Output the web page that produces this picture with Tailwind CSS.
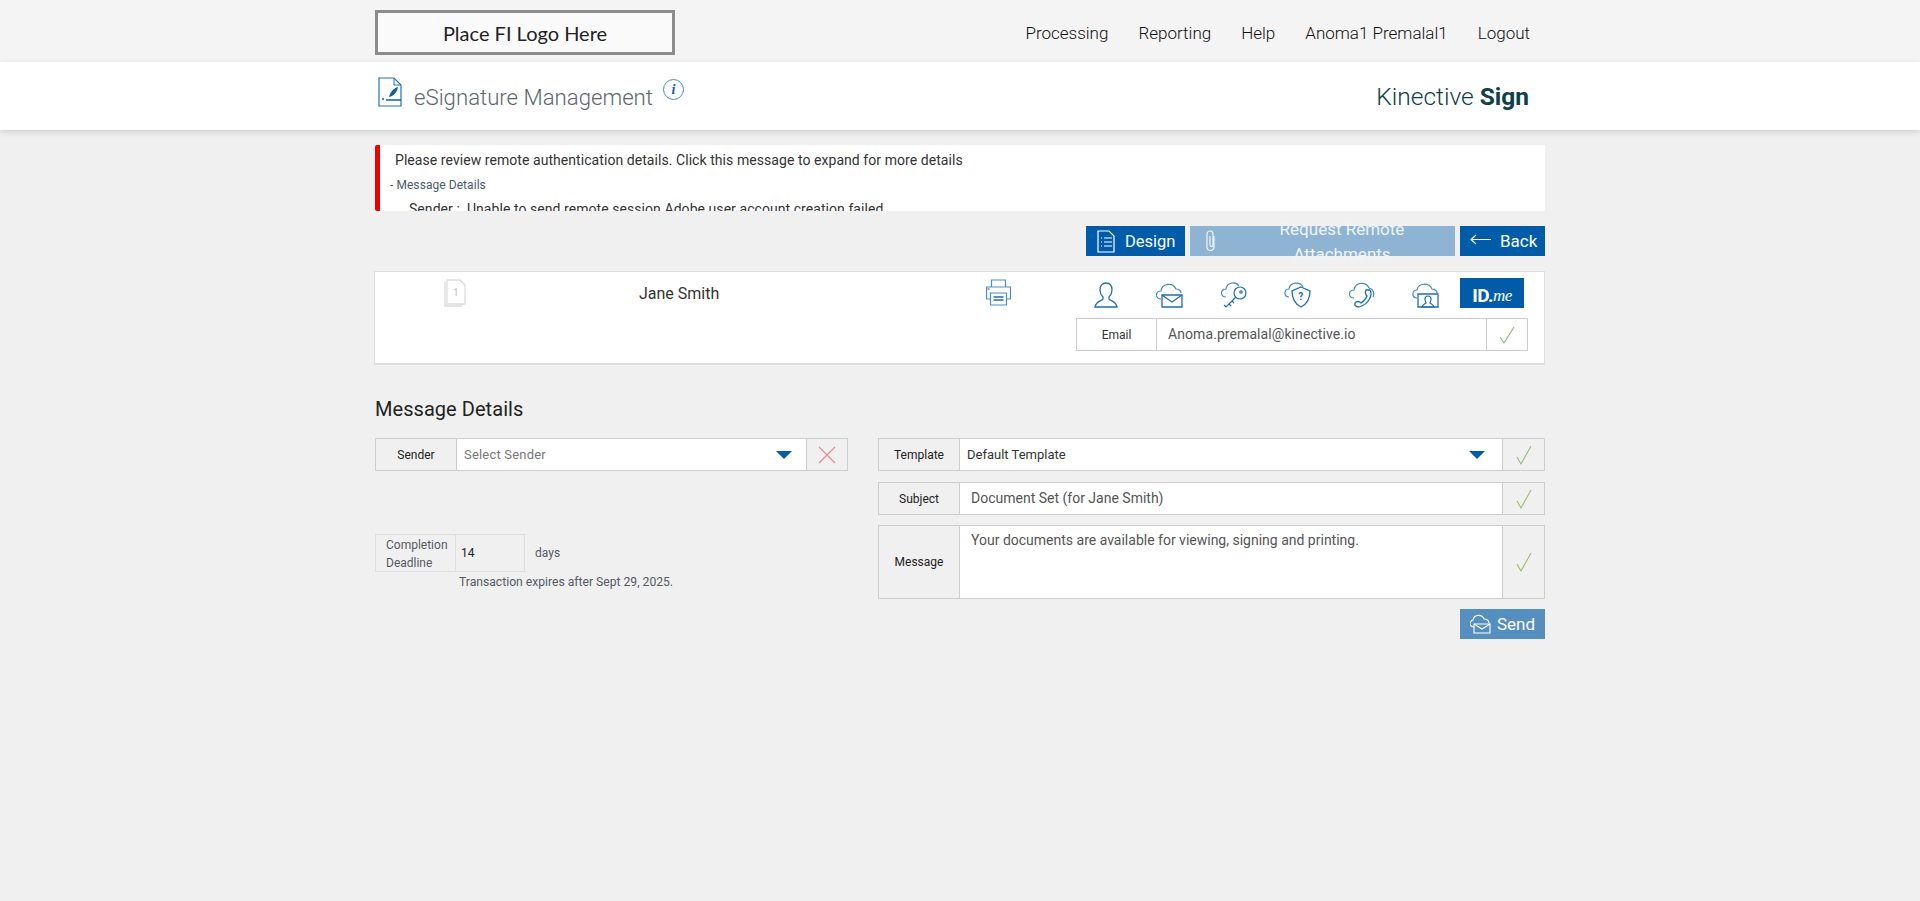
<!DOCTYPE html>
<html lang="en">
<head>
  <meta charset="UTF-8" />
  <title>eSignature Management</title>
  <script src="https://cdn.jsdelivr.net/npm/@tailwindcss/browser@4"></script>
</head>
<body class="min-h-[901px] bg-[#f0f0f0] font-['Roboto',sans-serif] text-[#333]">

  <!-- top nav -->
  <div class="h-[62px] bg-[#f4f4f4]">
    <div class="w-[1170px] mx-auto h-full flex items-start justify-between">
      <div class="mt-[10px] w-[300px] h-[45px] border-[3px] border-[#8c8c8c] bg-[#fafafa] flex items-center justify-center font-['Lato',sans-serif] font-normal text-[20px] text-[#222]">Place FI Logo Here</div>
      <nav class="flex gap-[30px] pr-[15px] pt-[23px] text-[17px] leading-[20px] font-light text-[#111]">
        <a>Processing</a>
        <a>Reporting</a>
        <a>Help</a>
        <a>Anoma1 Premalal1</a>
        <a>Logout</a>
      </nav>
    </div>
  </div>

  <!-- title bar -->
  <div class="h-[68px] bg-white shadow-[0_2px_6px_rgba(0,0,0,0.15)]">
    <div class="w-[1170px] mx-auto h-full flex justify-between">
      <div class="flex items-start">
        <svg class="ml-[3px] mt-[15px]" width="24" height="30" viewBox="0 0 24 30" fill="none">
          <path d="M1 1h15l7 7v21H1z" stroke="#2272b6" stroke-width="1.2" fill="#fff"/>
          <path d="M16 1v7h7" stroke="#2272b6" stroke-width="1"/>
          <path d="M11 20c1-5 5-9 9-10-1 5-4 9-9 10z" fill="#0f5ea8"/>
          <path d="M8 23h15" stroke="#0f5ea8" stroke-width="1.5"/>
          <path d="M4 21l2 2m0-2l-2 2" stroke="#0f5ea8" stroke-width=".8"/>
        </svg>
        <h1 class="ml-[12px] mt-[20px] text-[22.2px] leading-[30px] font-light text-[#5d6670]">eSignature Management</h1>
        <div class="ml-[10px] mt-[17px] w-[21px] h-[21px] rounded-full border border-[#3e8ec9] flex items-center justify-center font-['Liberation_Serif',serif] italic font-bold text-[14px] text-[#0f5ea8]">i</div>
      </div>
      <div class="pr-[16px] pt-[19px] text-[24.5px] leading-[32px] font-light text-[#0e4049]">Kinective <span class="font-bold">Sign</span></div>
    </div>
  </div>

  <div class="w-[1170px] mx-auto">
    <!-- alert -->
    <div class="mt-[15px] h-[66px] bg-white border-l-[5px] border-[#f00000] rounded-l-[2px] overflow-hidden text-[14px] text-[#333] tracking-[0.06px]">
      <p class="pl-[15px] pt-[5px] leading-[20px]">Please review remote authentication details. Click this message to expand for more details</p>
      <p class="pl-[10px] pt-[5px] leading-[20px] text-[12px] text-[#4a5a6a]">- Message Details</p>
      <p class="pl-[29px] pt-[4px] leading-[20px]">Sender :&nbsp; Unable to send remote session Adobe user account creation failed</p>
    </div>

    <!-- action buttons -->
    <div class="mt-[15px] flex justify-end gap-[5px] text-white">
      <button class="w-[99px] h-[30px] bg-[#005ca8] flex items-center pl-[11px] text-[16.5px] pt-[1px]">
        <svg class="-mt-[1px]" width="18" height="23" viewBox="0 0 18 23" fill="none" stroke="#fff" stroke-width="1.2"><path d="M1 1h11l5 5v16H1z"/><path d="M4 8h1M7 8h8M4 12h1M7 12h8M4 16h1M7 16h8"/></svg>
        <span class="ml-[10px] translate-y-[1px]">Design</span>
      </button>
      <button class="w-[265px] h-[30px] bg-[#8fb3d3] flex items-center pl-[15px] text-[#eef4f9] text-[17px]">
        <svg width="12" height="24" viewBox="0 0 12 24" fill="none" stroke="#eef4f9" stroke-width="1.2"><path d="M9 7v11a3.5 3.5 0 0 1-7 0V5a3 3 0 0 1 6 0v11a1.5 1.5 0 0 1-3 0V7"/></svg>
        <span class="ml-[12px] translate-y-[1px]">Request Remote Attachments</span>
      </button>
      <button class="w-[85px] h-[30px] bg-[#005ca8] flex items-center pl-[10px] text-[17px]">
        <svg class="-mt-[3px]" width="21" height="12" viewBox="0 0 21 12" fill="none" stroke="#fff" stroke-width="1.2"><path d="M21 5.5H1M6 1L1 5.5 6 10"/></svg>
        <span class="ml-[9px] translate-y-[1px]">Back</span>
      </button>
    </div>

    <!-- recipient card -->
    <div class="mt-[15px] -ml-[1px] h-[94px] bg-white border border-[#dedede] border-b-[2px] flex">
      <div class="ml-[69px] w-[22px] pt-[7px]">
        <svg width="22" height="28" viewBox="0 0 22 28" fill="none" stroke="#dcdcdc" stroke-width="1.3"><path d="M1 3v24h16v-2"/><path d="M3 1h13l5 5v19H3z"/><text x="9" y="17" font-size="10" font-family="Roboto" font-weight="700" fill="#d0d0d0" stroke="none">1</text></svg>
      </div>
      <div class="ml-[173px] w-[346px] pt-[12px] text-[16px] leading-[20px] text-[#333]">Jane Smith</div>
      <div class="pt-[7px]">
        <svg width="27" height="27" viewBox="0 0 26 27" fill="none" stroke="#4a8fc7" stroke-width="1.2"><path d="M6 8V1h14v7"/><path d="M6 20H1V8h24v12h-5"/><path d="M5 25V14h16v12H5z" fill="#fff"/><path d="M8 18h10M8 21h10" stroke="#1f6bb0" stroke-width="1.4"/><path d="M2 10h2" stroke="#1f6bb0"/></svg>
      </div>
      <div class="ml-auto w-[452px] mr-[16px] pt-[6px]">
        <div class="h-[30px] flex items-end gap-[37px] pl-[18px]">
          <svg width="24" height="26" viewBox="0 0 24 26" fill="none" stroke="#1f6fb5" stroke-width="1.3"><path d="M12 1c4 0 6 3 6 7 0 3-1 5-3 7v2c1 2 7 2 8 8H1c1-6 7-6 8-8v-2C7 13 6 11 6 8c0-4 2-7 6-7z"/></svg>
          <svg width="28" height="25" viewBox="0 0 28 25" fill="none" stroke="#3f8bc8" stroke-width="1.2"><path d="M6 16c-6 0-6-8 0-8 1-8 12-9 15-2 3 0 5 2 5 4"/><path d="M7 12h20v12H7z" fill="#fff" stroke="#1f6fb5" stroke-width="1.3"/><path d="M7 12l10 7 10-7" stroke="#1f6fb5" stroke-width="1.3"/></svg>
          <svg width="27" height="26" viewBox="0 0 27 26" fill="none" stroke="#3f8bc8" stroke-width="1.2"><path d="M6 15c-6 0-6-8 0-8 1-7 10-8 13-3"/><circle cx="20" cy="11" r="6" fill="#fff" stroke="#1f6fb5"/><circle cx="21" cy="10" r="1.2" stroke="#1f6fb5"/><path d="M16 15L6 25l-2-2M9 22l2 2M12 19l2 2" stroke="#1f6fb5"/></svg>
          <svg width="27" height="26" viewBox="0 0 27 26" fill="none" stroke="#3f8bc8" stroke-width="1.2"><path d="M5 15c-6 0-5-8 0-8 1-7 11-8 14-2"/><path d="M17 5l9 4c0 8-3 13-9 16-6-3-9-8-9-16z" fill="#fff" stroke="#1f6fb5" stroke-width="1.3"/><text x="14.2" y="18" font-size="10" font-weight="700" font-family="Roboto" fill="#1f6fb5" stroke="none">?</text></svg>
          <svg width="27" height="26" viewBox="0 0 27 26" fill="none" stroke="#3f8bc8" stroke-width="1.2"><path d="M6 16c-6 0-6-8 0-8 1-8 12-9 15-2 4 1 6 5 4 9"/><path d="M22 8c3 5-1 14-11 17-3 0-5-2-4-4 2-2 4-2 6 0 3-2 5-4 6-7-2-2-2-4-1-6 1 0 3 0 4 0z" fill="#fff" stroke="#1f6fb5" stroke-width="1.3"/></svg>
          <svg width="27" height="25" viewBox="0 0 27 25" fill="none" stroke="#3f8bc8" stroke-width="1.2"><path d="M5 15c-6 0-5-8 0-8 1-7 12-8 15-1 3 0 5 2 5 4"/><path d="M6 11h20v13H6z" fill="#fff" stroke="#1f6fb5" stroke-width="1.3"/><path d="M16 13c2 0 3 1 3 3s-1 3-1 4c1 1 3 1 4 4H10c1-3 3-3 4-4 0-1-1-2-1-4s1-3 3-3z" stroke="#1f6fb5"/></svg>
          <div class="-ml-[16px] w-[64px] h-[30px] bg-[#005ca8] flex items-end justify-center pb-[2px] text-white text-[19px] leading-[20px] font-bold tracking-[-0.5px]">ID.<span class="font-['Liberation_Serif',serif] italic font-normal text-[17px]">me</span></div>
        </div>
        <div class="mt-[10px] h-[33px] flex border border-[#cdcdcd] bg-white">
          <div class="w-[80px] border-r border-[#cdcdcd] flex items-center justify-center text-[12px] text-[#333]">Email</div>
          <div class="flex-1 flex items-center pl-[11px] text-[14px] text-[#555] tracking-[0.08px]">Anoma.premalal@kinective.io</div>
          <div class="w-[41px] border-l border-[#cdcdcd] flex items-center justify-center">
            <svg width="16" height="18" viewBox="0 0 16 18" fill="none" stroke="#8db86a" stroke-width="1.1"><path d="M1 11l4 6L15 1"/></svg>
          </div>
        </div>
      </div>
    </div>

    <h2 class="mt-[29px] text-[20px] leading-[30px] text-[#222] tracking-[0.05px]">Message Details</h2>

    <div class="mt-[14px] flex gap-[30px] items-start">
      <!-- left col -->
      <div class="w-[473px]">
        <div class="h-[33px] flex border border-[#cdcdcd]">
          <div class="w-[80px] flex items-center justify-center text-[12px] text-[#222]">Sender</div>
          <div class="flex-1 bg-white border-x border-[#cdcdcd] flex items-center justify-between pl-[7px] pr-[14px] text-[13px] text-[#777] tracking-[0.2px]">
            <span>Select Sender</span>
            <span class="w-0 h-0 border-x-[8px] border-x-transparent border-t-[8px] border-t-[#005ca8]"></span>
          </div>
          <div class="w-[40px] flex items-center justify-center">
            <svg width="18" height="18" viewBox="0 0 18 18" stroke="#e48a94" stroke-width="1.2"><path d="M1 1l16 16M17 1L1 17"/></svg>
          </div>
        </div>
        <div class="mt-[63px] flex items-center">
          <div class="w-[150px] h-[38px] flex border border-[#dedede]">
            <div class="w-[80px] border-r border-[#dedede] pl-[10px] text-[12px] leading-[18px] pt-[1px] text-[#555a66]">Completion Deadline</div>
            <div class="flex-1 flex items-center pl-[5px] text-[12px] text-[#222]">14</div>
          </div>
          <span class="ml-[10px] text-[12px] text-[#555a66]">days</span>
        </div>
        <p class="ml-[84px] mt-[1px] text-[12.15px] leading-[18px] text-[#555a66]">Transaction expires after Sept 29, 2025.</p>
      </div>

      <!-- right col -->
      <div class="flex-1 flex flex-col">
        <div class="h-[33px] flex border border-[#cdcdcd]">
          <div class="w-[80px] flex items-center justify-center text-[12px] text-[#222]">Template</div>
          <div class="flex-1 bg-white border-x border-[#cdcdcd] flex items-center justify-between pl-[7px] pr-[17px] text-[13px] text-[#333]">
            <span>Default Template</span>
            <span class="w-0 h-0 border-x-[8px] border-x-transparent border-t-[8px] border-t-[#005ca8]"></span>
          </div>
          <div class="w-[41px] flex items-center justify-center">
            <svg width="16" height="20" viewBox="0 0 16 20" fill="none" stroke="#9dbb6e" stroke-width="1.1"><path d="M1 12l4 7L15 1"/></svg>
          </div>
        </div>
        <div class="mt-[11px] h-[33px] flex border border-[#cdcdcd]">
          <div class="w-[80px] flex items-center justify-center text-[12px] text-[#222]">Subject</div>
          <div class="flex-1 bg-white border-x border-[#cdcdcd] flex items-center pl-[11px] text-[14px] text-[#555]">Document Set (for Jane Smith)</div>
          <div class="w-[41px] flex items-center justify-center">
            <svg width="16" height="20" viewBox="0 0 16 20" fill="none" stroke="#9dbb6e" stroke-width="1.1"><path d="M1 12l4 7L15 1"/></svg>
          </div>
        </div>
        <div class="mt-[10px] h-[74px] flex border border-[#cdcdcd]">
          <div class="w-[80px] flex items-center justify-center text-[12px] text-[#222]">Message</div>
          <div class="flex-1 bg-white border-x border-[#cdcdcd] pl-[11px] pt-[5px] text-[14px] leading-[18px] text-[#555]">Your documents are available for viewing, signing and printing.</div>
          <div class="w-[41px] flex items-center justify-center">
            <svg width="16" height="20" viewBox="0 0 16 20" fill="none" stroke="#9dbb6e" stroke-width="1.1"><path d="M1 12l4 7L15 1"/></svg>
          </div>
        </div>
        <div class="mt-[10px] flex justify-end">
          <button class="w-[85px] h-[30px] bg-[#558fc0] text-white text-[17px] flex items-center pl-[10px]">
            <svg width="21" height="21" viewBox="0 0 21 21" fill="none" stroke="#fff" stroke-width="1.1"><path d="M4 13c-5 0-5-6-1-7 1-6 9-6 11-1 3 0 5 2 5 4"/><path d="M4 10h16v9H4z" fill="#558fc0"/><path d="M4 10l8 5 8-5"/></svg>
            <span class="ml-[6px] translate-y-[1px]">Send</span>
          </button>
        </div>
      </div>
    </div>
  </div>
</body>
</html>
